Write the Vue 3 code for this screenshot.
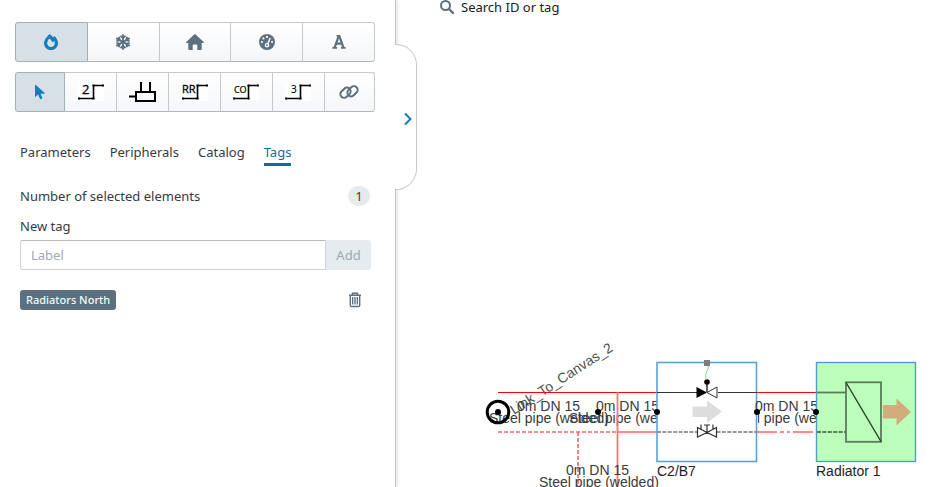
<script setup>
import { ref } from 'vue'

const disciplines = ['Heating', 'Cooling', 'Building', 'Dashboard', 'Text']
const discipline = ref('Heating')

const tools = [
  { name: 'Select' },
  { name: 'Two pipes', text: '2', size: 13, x: 4, y: 11, family: 'Open Sans', stroke: 0.3 },
  { name: 'Distributor' },
  { name: 'Double return', text: 'RR', size: 11, x: 0, y: 10, family: 'Open Sans', stroke: 0.3 },
  { name: 'Change over', text: 'CO', size: 9, x: 1, y: 10, family: 'Noto Sans', stroke: 0.2 },
  { name: 'Three pipes', text: '3', size: 10, x: 6, y: 10, family: 'Noto Sans', stroke: 0.1 },
  { name: 'Link' },
]
const tool = ref('Select')

const tabs = ['Parameters', 'Peripherals', 'Catalog', 'Tags']
const tab = ref('Tags')
const label = ref('')
const tags = ref(['Radiators North'])

function addTag() {
  if (label.value) tags.value.push(label.value)
  label.value = ''
}
</script>

<template>
  <div class="app">
    <aside class="sidebar">
      <div class="group">
        <button
          v-for="d in disciplines"
          :key="d"
          type="button"
          :aria-label="d"
          :class="{ active: d === discipline }"
          @click="discipline = d"
        >
          <svg v-if="d === 'Heating'" width="16" height="16" viewBox="0 0 16 16">
            <path fill="currentColor" fill-rule="evenodd" d="M6.7 0C8.3 1.2 9.3 2.4 10 3.4L11.6 1.9C13.6 4 15 6.6 15 9.2C15 13 12 16 8 16S1 13 1 9.2C1 6 4 2.6 6.7 0ZM6.4 4.6C4.8 6.2 4.2 7.8 4.2 9.2C4.2 11.5 5.9 13 8 13S11.8 11.5 11.8 9.2C11.8 8.4 11.6 7.5 11.3 6.8L9.8 8.6C8.9 7.2 7.4 5.6 6.4 4.6Z" />
          </svg>
          <svg v-else-if="d === 'Cooling'" width="16" height="16" viewBox="0 0 16 16" fill="none" stroke="currentColor" stroke-width="1.8">
            <g v-for="a in [0, 60, 120]" :key="a" :transform="`rotate(${a} 8 8)`">
              <path d="M8 .2V15.8M5.5 1.8L8 4.3L10.5 1.8M5.5 14.2L8 11.7L10.5 14.2" />
            </g>
          </svg>
          <svg v-else-if="d === 'Building'" width="20" height="16" viewBox="0 0 20 16">
            <path fill="currentColor" d="M10 0L19 8.2Q19 9 18 9H16.7V15Q16.7 16 15.7 16H12.3V11.5Q12.3 10.5 11.3 10.5H8.7Q7.7 10.5 7.7 11.5V16H4.3Q3.3 16 3.3 15V9H2Q1 9 1 8.2L9.2.6Z" />
          </svg>
          <svg v-else-if="d === 'Dashboard'" width="16" height="16" viewBox="0 0 16 16">
            <circle cx="8" cy="8" r="8" fill="currentColor" />
            <g fill="#f8fafc">
              <circle cx="8" cy="2.9" r="1.1" />
              <circle cx="4.4" cy="4.4" r="1.1" />
              <circle cx="2.9" cy="8" r="1.1" />
              <circle cx="13.1" cy="8" r="1.1" />
              <circle cx="8" cy="11.2" r="2.2" />
            </g>
            <path d="M8.4 10.5L11 4.5" stroke="#f8fafc" stroke-width="1.5" stroke-linecap="round" />
            <circle cx="8" cy="11.2" r=".9" fill="currentColor" />
          </svg>
          <svg v-else width="14" height="14" viewBox="0 0 14 14" fill="none" stroke="currentColor">
            <path stroke-width="2.2" d="M2.6 12.6L6.7 1.2H7.4L11.4 12.6M4.2 8.7H9.8" />
            <path stroke-width="1.8" d="M.4 12.9H5M9 12.9H13.6M4.6 .9H7.5" />
          </svg>
        </button>
      </div>

      <div class="group tools">
        <button
          v-for="t in tools"
          :key="t.name"
          type="button"
          :aria-label="t.name"
          :class="{ active: t.name === tool }"
          @click="tool = t.name"
        >
          <svg v-if="t.name === 'Select'" width="12" height="16" viewBox="0 0 12 16">
            <path fill="currentColor" d="M1 1.3V13.2L4 10.5L6 14.8Q6.4 15.4 7.1 15.1L8.1 14.6Q8.6 14.3 8.3 13.7L6.5 9.7H10.5Q11 9.4 10.6 8.9L1.9.9Q1.2.6 1 1.3Z" />
          </svg>
          <svg v-else-if="t.name === 'Distributor'" width="28" height="22" viewBox="0 0 28 22" fill="none" stroke="#000" stroke-width="2">
            <path d="M7 11H26V20H7ZM0 15.5H7M12 1V11M21 1V11" />
          </svg>
          <svg v-else-if="t.name === 'Link'" width="20" height="16" viewBox="0 0 20 16" fill="none" stroke="currentColor" stroke-width="2">
            <rect x=".8" y="5" width="11.4" height="7.4" rx="3.7" transform="rotate(-45 6.5 8.7)" />
            <rect x="7.8" y="3.6" width="11.4" height="7.4" rx="3.7" transform="rotate(-45 13.5 7.3)" />
          </svg>
          <svg v-else class="pipe" width="26" height="18" viewBox="0 0 26 18">
            <rect width="26" height="18" fill="#fff" />
            <text :x="t.x" :y="t.y" :font-size="t.size" :font-family="t.family" stroke="#000" :stroke-width="t.stroke">{{ t.text }}</text>
            <path d="M1 15.5H15.5V2.5H25" fill="none" stroke="#000" stroke-width="1.6" />
            <path d="M0 14.5H2V16.5H0ZM14.5 14.5H16.5V16.5H14.5ZM14.5 1.5H16.5V3.5H14.5ZM24 1.5H26V3.5H24Z" />
          </svg>
        </button>
      </div>

      <div class="content">
        <nav class="tabs">
          <a v-for="t in tabs" :key="t" href="#" :class="{ current: t === tab }" @click.prevent="tab = t">{{ t }}</a>
        </nav>

        <div class="count">
          <span>Number of selected elements</span>
          <span class="badge">1</span>
        </div>

        <form @submit.prevent="addTag">
          <label for="new-tag">New tag</label>
          <div class="entry">
            <input id="new-tag" v-model="label" type="text" placeholder="Label" />
            <button type="submit" :disabled="!label">Add</button>
          </div>
        </form>

        <div v-for="(t, i) in tags" :key="t" class="tag-row">
          <span class="tag">{{ t }}</span>
          <button type="button" :aria-label="`Delete ${t}`" @click="tags.splice(i, 1)">
            <svg width="14" height="16" viewBox="0 0 14 16" fill="none" stroke="currentColor">
              <path stroke-width="1.4" d="M1 3.2H13M4.5 3V1.3H9.5V3M2.3 4V13.2Q2.3 14.5 3.6 14.5H10.4Q11.7 14.5 11.7 13.2V4" />
              <path stroke-width="1" d="M4.5 5V12.5M6.2 5V12.5M7.8 5V12.5M9.5 5V12.5" />
            </svg>
          </button>
        </div>
      </div>

      <button class="handle" type="button" aria-label="Toggle panel">
        <svg width="8" height="14" viewBox="0 0 8 14" fill="none" stroke="#147eb9" stroke-width="2">
          <path d="M1 1.5L6.5 7L1 12.5" />
        </svg>
      </button>
    </aside>

    <main class="canvas">
      <label class="search">
        <svg width="14" height="14" viewBox="0 0 14 14" fill="none" stroke="#5c7080">
          <circle cx="5.5" cy="5.5" r="4.5" stroke-width="2" />
          <path d="M9 9L13 13" stroke-width="2.4" stroke-linecap="round" />
        </svg>
        <input type="text" placeholder="Search ID or tag" aria-label="Search ID or tag" />
      </label>

      <svg class="diagram" width="550" height="147" viewBox="396 340 550 147">
        <g class="labels">
          <text transform="translate(514 415) rotate(-33)" class="faded">Link_To_Canvas_2</text>
          <text x="517" y="411">0m DN 15</text>
          <text x="489" y="423">Steel pipe (welded)</text>
          <text x="596" y="411">0m DN 15</text>
          <text x="569" y="423">Steel pipe (welded)</text>
        </g>

        <g fill="none" stroke="#f00">
          <path d="M498 392.5H657M757 392.5H816" />
          <path d="M617.5 392V487" stroke="#ff7373" stroke-width="1.8" />
          <g stroke="#ff6464" stroke-width="1.6">
            <path d="M498 432H618M578 432V487" stroke-dasharray="4 2" />
            <path d="M618 432H638M638 432H657M757 432H816" stroke-dasharray="20 3 4 3 3 3" />
          </g>
        </g>

        <rect x="657" y="362.5" width="99.5" height="99" fill="#fff" stroke="#5ba4da" stroke-width="1.6" />

        <g class="labels">
          <text x="755" y="411">0m DN 15</text>
          <svg x="758" y="411" width="58" height="17" viewBox="758 411 58 17">
            <text x="728" y="423">Steel pipe (welded)</text>
          </svg>
          <text x="566" y="475">0m DN 15</text>
          <text x="539" y="487">Steel pipe (welded)</text>
          <text x="657" y="476" class="name">C2/B7</text>
          <text x="816" y="476" class="name">Radiator 1</text>
        </g>

        <rect x="816.5" y="362.5" width="99" height="99" fill="#bfb" stroke="#4d9fca" stroke-width="1.4" />

        <circle cx="498" cy="412" r="10.8" fill="none" stroke="#000" stroke-width="3" />
        <g>
          <circle v-for="x in [498, 598, 657, 757, 816]" :key="x" :cx="x" cy="412" r="3" />
        </g>

        <path d="M657 392.5H697M718 392.5H757" stroke="#333" />
        <path d="M657 432H757" stroke="#777" stroke-width="1.6" stroke-dasharray="4 1.4" />
        <path d="M696.5 387V398L707 392.5Z" />
        <path d="M717 387V398L707 392.5Z" fill="#fff" stroke="#333" />
        <path d="M707 382V392" stroke="#222" stroke-width="1.4" />
        <circle cx="707" cy="382" r="2.8" />
        <path d="M708 366Q709 368 707 371T706 380" fill="none" stroke="#78e878" />
        <rect x="704" y="360" width="6" height="6" fill="#7c7c7c" />
        <path d="M692.5 406.5H707V400.5L722 411.5L707 423V417H692.5Z" fill="#ddd" />
        <path d="M697.5 427.5V437L707 432.5ZM716.5 427.5V437L707 432.5Z" fill="#fff" stroke="#333" stroke-width="1.2" />
        <path d="M701 424.5V429M704 425H710M707 425V432M713 424.5V429" fill="none" stroke="#333" stroke-width="1.2" />

        <g fill="none" stroke="#5b7b5b" stroke-width="1.8">
          <path d="M817 392.5H846" />
          <path d="M817 432H846" stroke-dasharray="4 1.4" />
          <rect x="846" y="382.3" width="35" height="59.5" />
          <path d="M846 382.5L881 441.5" stroke="#263d26" stroke-width="1.4" />
        </g>
        <path d="M883 405H896.5V398.5L911 412L896.5 425.5V418.5H883Z" fill="#d2ac7c" />
      </svg>
    </main>
  </div>
</template>

<style>
body {
  margin: 0;
  background: #fff;
}
</style>

<style scoped>
.app {
  display: flex;
  min-height: 100vh;
  overflow: hidden;
  color: #343b41;
  font: 13px/20px 'Noto Sans', sans-serif;
}
* {
  box-sizing: border-box;
}
button,
input {
  margin: 0;
  padding: 0;
  font: inherit;
}
svg {
  display: block;
  flex: none;
}
.pipe {
  overflow: visible;
}
.sidebar {
  position: relative;
  z-index: 1;
  flex: none;
  width: 396px;
  padding: 22px 20px 0 15px;
  border-right: 1px solid #bfc4c8;
  background: #fff;
  box-shadow: 1px 0 4px rgba(16, 22, 26, 0.15);
}
.group {
  display: flex;
  height: 40px;
  margin-bottom: 10px;
}
.group button {
  display: flex;
  flex: 1;
  align-items: center;
  justify-content: center;
  border: 1px solid #c5c9cc;
  border-left-width: 0;
  border-bottom-color: #b1b6ba;
  background: linear-gradient(#fff, #f4f6f9);
  color: #5c7080;
}
.group button:first-child {
  border-left-width: 1px;
  border-radius: 3px 0 0 3px;
}
.group button:last-child {
  border-radius: 0 3px 3px 0;
}
.group button.active {
  border-color: #a3afb9;
  background: #d8e0e7;
  color: #147dbd;
}
.tools button {
  flex: 52;
}
.tools button:first-child {
  flex: 49;
}
.tools button:last-child {
  flex: 50;
}
.content {
  padding: 20px 4px 0 5px;
}
.tabs {
  display: flex;
  gap: 19px;
}
.tabs a {
  padding-bottom: 1px;
  border-bottom: 3px solid transparent;
  color: inherit;
  text-decoration: none;
}
.tabs a.current {
  border-color: #106ba3;
  color: #106ba3;
}
.count {
  display: flex;
  align-items: center;
  justify-content: space-between;
  margin-top: 20px;
  padding-right: 1px;
}
.badge {
  width: 22px;
  border-radius: 10px;
  background: #e6eaed;
  text-align: center;
}
form label {
  display: block;
  margin: 10px 0 4px;
}
.entry {
  display: flex;
  height: 30px;
}
.entry input {
  flex: 1;
  min-width: 0;
  padding: 0 10px;
  border: 1px solid #cfd3d6;
  border-top-color: #b6babd;
  border-radius: 3px 0 0 3px;
}
.entry input::placeholder {
  color: #a0aab3;
}
.entry button {
  width: 45px;
  border: 0;
  border-radius: 0 3px 3px 0;
  background: #e6ebef;
  color: #9ba8b3;
}
.tag-row {
  display: flex;
  align-items: center;
  justify-content: space-between;
  margin-top: 20px;
  padding-right: 9px;
}
.tag {
  padding: 0 6px;
  border-radius: 3px;
  background: #5c7080;
  color: #f5f8fa;
  font-size: 11px;
  font-weight: 500;
}
.tag-row button {
  border: 0;
  background: none;
  color: #5c7080;
}
.handle {
  position: absolute;
  top: 44px;
  left: 100%;
  display: flex;
  align-items: center;
  justify-content: flex-end;
  width: 22px;
  height: 146px;
  padding: 4px 4px 0 0;
  border: 1px solid #c8c8c8;
  border-left: 0;
  border-radius: 0 21px 21px 0;
  background: #fff;
}
.canvas {
  display: flex;
  flex: 1;
  flex-direction: column;
  min-width: 0;
}
.search {
  display: flex;
  align-items: center;
  gap: 7px;
  height: 14px;
  margin-left: 44px;
}
.search input {
  flex: 1;
  border: 0;
  outline: 0;
}
.search input::placeholder {
  color: #182026;
  opacity: 1;
}
.diagram {
  margin-top: auto;
}
.labels text {
  fill: #3a3a3a;
  font: 14px 'Liberation Sans', sans-serif;
}
.labels .faded {
  fill: #505050;
}
.labels .name {
  fill: #222;
}
</style>
